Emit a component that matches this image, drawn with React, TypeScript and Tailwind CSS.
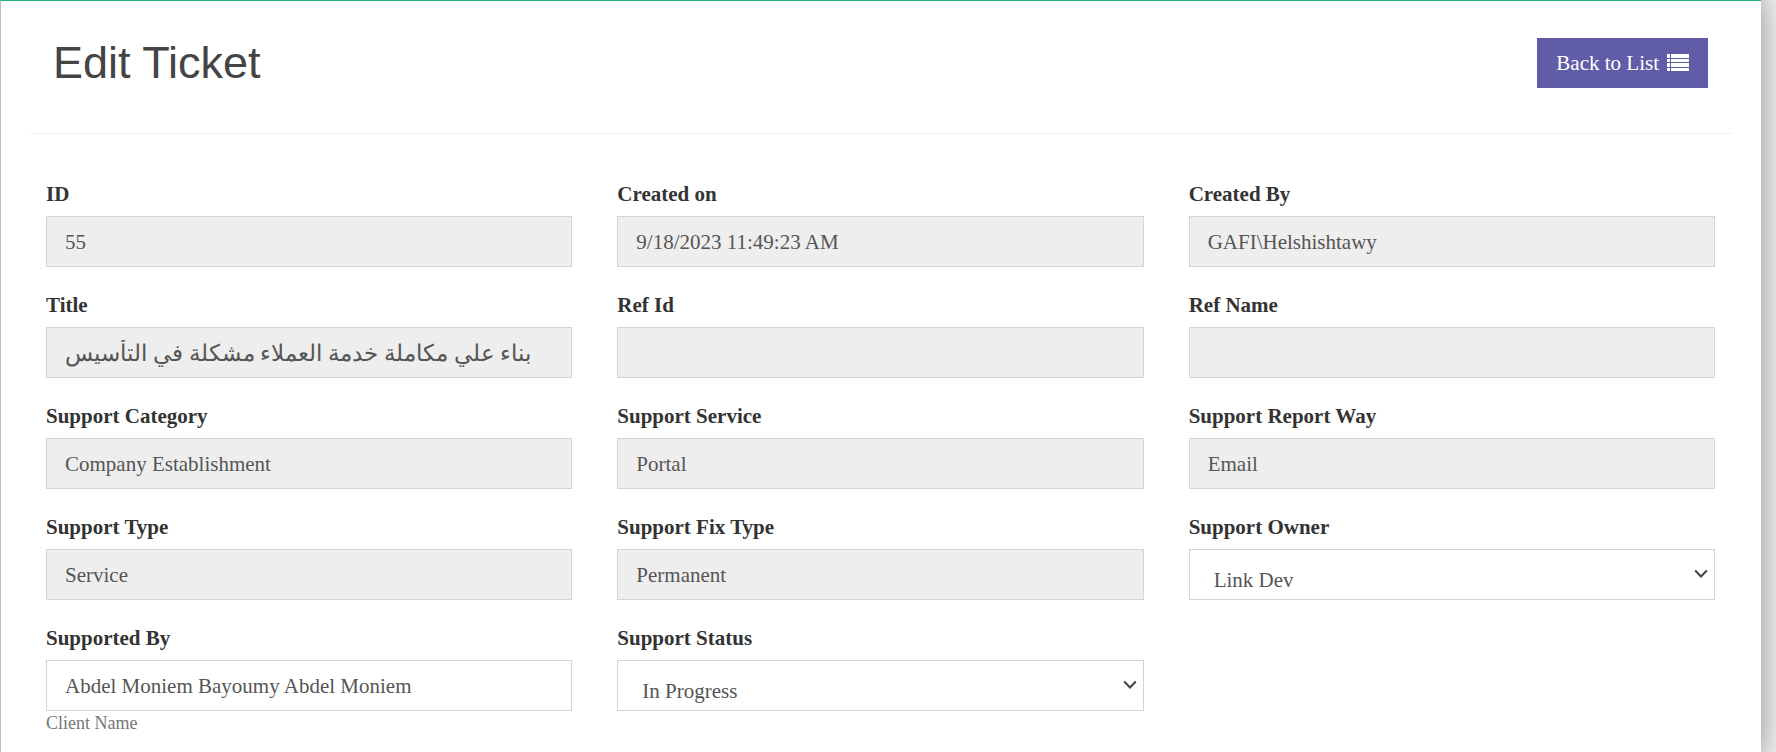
import { ReactNode } from "react";

const controlBase =
  "block h-[51px] w-full rounded-none border border-[#d0d4de] text-[#555555] outline-none";

const textFont =
  "font-['Liberation_Serif','Noto_Sans',serif]";

function Field({ id, label, hint, children }: { id: string; label: string; hint?: string; children: ReactNode }) {
  return (
    <div className="flex flex-col">
      <label htmlFor={id} className="mb-2 text-[21px] leading-7 font-bold text-[#333333]">
        {label}
      </label>
      {children}
      {hint && <span className="text-[18px] leading-6 text-[#777777]">{hint}</span>}
    </div>
  );
}

function TextField(props: {
  id: string;
  label: string;
  value?: string;
  hint?: string;
  editable?: boolean;
  arabic?: boolean;
}) {
  const { id, label, value = "", hint, editable = false, arabic = false } = props;
  const tone = editable ? "bg-white" : "bg-[#eeeeee]";
  const size = arabic ? "text-[23px]" : "text-[21px]";
  return (
    <Field id={id} label={label} hint={hint}>
      <input
        id={id}
        type="text"
        defaultValue={value}
        readOnly={!editable}
        className={`${controlBase} px-[18px] pt-0.5 ${tone} ${size}`}
      />
    </Field>
  );
}

function SelectField({ id, label, options }: { id: string; label: string; options: string[] }) {
  return (
    <Field id={id} label={label}>
      <div className="relative">
        <select
          id={id}
          defaultValue={options[0]}
          className={`${controlBase} appearance-none bg-white pt-3 pr-8 pl-6 text-[21px]`}
        >
          {options.map((option) => (
            <option key={option}>{option}</option>
          ))}
        </select>
        <svg
          aria-hidden="true"
          viewBox="0 0 14 10"
          className="pointer-events-none absolute top-5 right-[7px] h-[10px] w-[14px] fill-none stroke-[#444444] stroke-2"
        >
          <path d="M1.2 1.5 7 7.5l5.800-6" />
        </svg>
      </div>
    </Field>
  );
}

function ListIcon() {
  return (
    <svg aria-hidden="true" viewBox="0 0 22 17" className="mb-1 h-[17px] w-[22px] fill-current">
      <path d="M0 0h3v4H0zM4 0h18v4H4zM0 5h3v3H0zM4 5h18v3H4zM0 9h3v4H0zM4 9h18v4H4zM0 14h3v3H0zM4 14h18v3H4z" />
    </svg>
  );
}

export default function App() {
  return (
    <div className={`min-h-screen overflow-hidden bg-white pr-[15px] ${textFont}`}>
      <main className="min-h-screen border-t border-l border-t-[#26ad72] border-l-[#bbbbbb] bg-white px-[30px] shadow-[-14px_0_40px_14px_rgba(0,0,0,0.5)]">
        <header className="flex items-start justify-between border-b border-[#eeeeee] pt-[37px] pr-[23px] pb-[45px] pl-[22px]">
          <h1 className="font-['Liberation_Sans',sans-serif] text-[45px] leading-[50px] text-[#444444]">Edit Ticket</h1>
          <a href="#list" className="flex h-[50px] items-center gap-2 bg-[#605ca8] px-[19px] pt-0.5 text-[21px] text-white">
            Back to List
            <ListIcon />
          </a>
        </header>

        <form className="grid grid-cols-3 gap-x-[45px] gap-y-6 pt-[46px] pr-4 pl-[15px]">
          <TextField id="ticket-id" label="ID" value="55" />
          <TextField id="created-on" label="Created on" value="9/18/2023 11:49:23 AM" />
          <TextField id="created-by" label="Created By" value="GAFI\Helshishtawy" />
          <TextField id="title" label="Title" value="بناء علي مكاملة خدمة العملاء مشكلة في التأسيس" arabic />
          <TextField id="ref-id" label="Ref Id" />
          <TextField id="ref-name" label="Ref Name" />
          <TextField id="category" label="Support Category" value="Company Establishment" />
          <TextField id="service" label="Support Service" value="Portal" />
          <TextField id="report-way" label="Support Report Way" value="Email" />
          <TextField id="support-type" label="Support Type" value="Service" />
          <TextField id="fix-type" label="Support Fix Type" value="Permanent" />
          <SelectField id="owner" label="Support Owner" options={["Link Dev"]} />
          <TextField id="supported-by" label="Supported By" value="Abdel Moniem Bayoumy Abdel Moniem" hint="Client Name" editable />
          <SelectField id="status" label="Support Status" options={["In Progress"]} />
        </form>
      </main>
    </div>
  );
}
